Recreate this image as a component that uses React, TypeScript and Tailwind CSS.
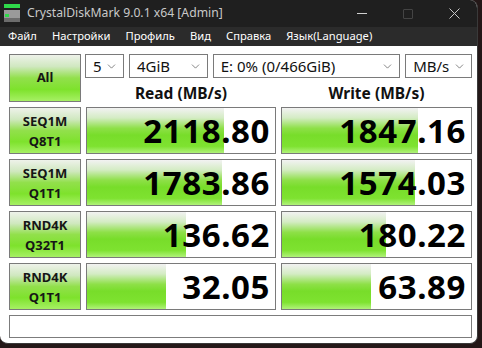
import { ChevronDown } from "lucide-react";

const rows = [
  { a: "SEQ1M", b: "Q8T1", read: "2118.80", readBar: 137, write: "1847.16", writeBar: 136 },
  { a: "SEQ1M", b: "Q1T1", read: "1783.86", readBar: 135, write: "1574.03", writeBar: 133 },
  { a: "RND4K", b: "Q32T1", read: "136.62", readBar: 99, write: "180.22", writeBar: 104 },
  { a: "RND4K", b: "Q1T1", read: "32.05", readBar: 79, write: "63.89", writeBar: 89 },
];

const menu = ["Файл", "Настройки", "Профиль", "Вид", "Справка", "Язык(Language)"];

export default function App() {
  return (
    <div className="w-[482px] h-[348px] bg-[#241818] font-['Noto_Sans',sans-serif] overflow-hidden">
      <div className="w-[478px] h-[344px] rounded-b-[8px] rounded-tr-[8px] overflow-hidden flex flex-col bg-white border-r border-b border-[#3a3a3a]">
        <TitleBar />
        <div className="h-[19px] bg-[#2b2b2b] flex items-center pl-[8px] gap-[15px] text-[11.2px] text-white">
          {menu.map((m) => (
            <span key={m}>{m}</span>
          ))}
        </div>
        <div className="flex-1 pt-[8px] pl-[9px]">
          <div className="grid grid-cols-[72px_190px_191px] grid-rows-[48px_47px_47px_47px_47px_23px] gap-x-[5px] gap-y-[5px]">
            <GreenButton>
              <span className="text-[13px] font-bold">All</span>
            </GreenButton>
            <div className="col-span-2 flex flex-col">
              <div className="flex gap-[5px] -ml-[1px]">
                <Combo w="w-[39px]" text="5" />
                <Combo w="w-[79px]" text="4GiB" />
                <Combo w="w-[188px]" text="E: 0% (0/466GiB)" />
                <Combo w="w-[67px]" text="MB/s" />
              </div>
              <div className="flex-1 grid grid-cols-[190px_191px] gap-x-[5px] items-end">
                <div className="text-center text-[15.5px] font-bold text-[#111] leading-none pb-[1px]">Read (MB/s)</div>
                <div className="text-center text-[15.5px] font-bold text-[#111] leading-none pb-[1px]">Write (MB/s)</div>
              </div>
            </div>
            {rows.map((r) => (
              <Row key={r.a + r.b} {...r} />
            ))}
            <div className="col-span-3 border border-[#7c7c7c] bg-white" />
          </div>
        </div>
      </div>
    </div>
  );
}

function TitleBar() {
  return (
    <div className="h-[27px] bg-[#1f1f1f] flex items-center text-[#c9c9c9]">
      <svg width="17" height="19" viewBox="0 0 17 19" className="ml-[4px] mr-[6px]">
        <rect x="0" y="0" width="16" height="4" fill="#2fd94a" />
        <rect x="0" y="6" width="16" height="12" fill="#9a9a9a" />
        <rect x="0" y="14" width="16" height="4" fill="#6c6c6c" />
        <rect x="1" y="10" width="4" height="3" fill="#2fd94a" />
      </svg>
      <span className="text-[12.2px]">CrystalDiskMark 9.0.1 x64 [Admin]</span>
      <div className="ml-auto flex items-center h-full">
        <div className="w-[46px] flex justify-center">
          <div className="w-[10px] h-[1px] bg-[#d0d0d0]" />
        </div>
        <div className="w-[46px] flex justify-center">
          <div className="w-[10px] h-[10px] border border-[#444] rounded-[1px]" />
        </div>
        <div className="w-[46px] flex justify-center">
          <svg width="11" height="11" viewBox="0 0 11 11">
            <path d="M0.5 0.5 L10.5 10.5 M10.5 0.5 L0.5 10.5" stroke="#c8c8c8" strokeWidth="1" />
          </svg>
        </div>
      </div>
    </div>
  );
}

function GreenButton({ children }: { children: React.ReactNode }) {
  return (
    <div className="border border-[#7a7a7a] bg-[linear-gradient(to_bottom,#eef2ea_0%,#d0e8c0_25%,#92e04c_50%,#7ee22c_75%,#a6f064_100%)] flex flex-col items-center justify-center text-[#161616]">
      {children}
    </div>
  );
}

function Combo({ w, text }: { w: string; text: string }) {
  return (
    <div className={`${w} h-[24px] border border-[#7a7a7a] bg-white flex items-center pl-[7px] pr-[5px] text-[15px] text-[#111]`}>
      <span className="flex-1 whitespace-nowrap leading-none">{text}</span>
      <ChevronDown size={13} strokeWidth={1.3} color="#555" />
    </div>
  );
}

function ValueBox({ value, bar }: { value: string; bar: number }) {
  return (
    <div className="relative border border-[#7a7a7a] bg-white overflow-hidden">
      <div
        className="absolute left-0 top-0 bottom-0 bg-[linear-gradient(to_bottom,#f2f2f2_0%,#d4ecc4_22%,#8ee048_45%,#78dd2a_60%,#7ee230_85%,#b0f27a_100%)]"
        style={{ width: bar }}
      />
      <div className="relative h-full flex items-center justify-end pr-[5px] text-[33px] font-bold text-black leading-none tracking-[0.6px]">
        {value}
      </div>
    </div>
  );
}

function Row({ a, b, read, readBar, write, writeBar }: (typeof rows)[number]) {
  return (
    <>
      <GreenButton>
        <span className="text-[13px] font-bold leading-[20px]">{a}</span>
        <span className="text-[13px] font-bold leading-[20px]">{b}</span>
      </GreenButton>
      <ValueBox value={read} bar={readBar} />
      <ValueBox value={write} bar={writeBar} />
    </>
  );
}
